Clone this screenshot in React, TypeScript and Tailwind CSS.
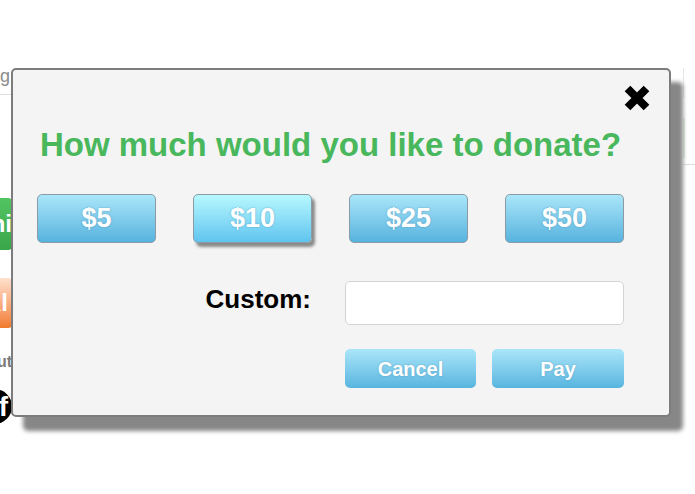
import React from "react";

const amountBase =
  "h-[49px] rounded-[5px] border border-[#8a9ba5] flex items-center justify-center text-white font-bold text-[27px] [text-shadow:0_0_2px_rgba(0,70,110,0.35)]";

export default function App() {
  return (
    <div className="relative w-[695px] h-[494px] bg-white overflow-hidden font-['Liberation_Sans',Arial,sans-serif]">
      {/* background page */}
      <div className="flex flex-col h-full">
        <div className="mt-[64px] h-[24px] w-[600px] overflow-hidden whitespace-nowrap text-[18px] leading-[24px] text-[#8c8c8c]">
          g for good causes, and let the others see the way forward that you like to help
        </div>
        <div className="flex flex-1">
          <div className="w-[12px] shrink-0 flex flex-col items-end overflow-hidden">
            <div className="mt-[6px] h-px w-[12px] bg-[#dedede]" />
            <div className="mt-[103px] h-[52px] w-[80px] shrink-0 rounded-[4px] bg-gradient-to-b from-[#52c462] to-[#3aa64b] flex items-center justify-end text-white font-bold text-[24px]">
              Onlini
            </div>
            <div className="mt-[28px] h-[50px] w-[80px] shrink-0 rounded-[4px] bg-gradient-to-b from-[#fde0cc] to-[#f07a2a] flex items-center justify-end pr-[4px] text-white font-bold text-[24px]">
              Al
            </div>
            <div className="mt-[24px] h-[20px] w-[60px] shrink-0 text-right text-[#7a7a7a] font-bold text-[16px] leading-[20px]">
              about
            </div>
            <div className="mt-[17px] h-[35px] w-[35px] shrink-0 rounded-full bg-black flex items-center justify-end pr-[4px] text-white font-bold text-[28px] leading-none">
              f
            </div>
          </div>
          <div className="flex-1" />
          <div className="w-[12px] shrink-0 flex flex-col">
            <div className="h-[30px] w-px bg-[#e6e6e6] -mt-[20px]" />
            <div className="mt-[20px] h-[40px] w-[2px] bg-[#e2ece2]" />
            <div className="mt-[6px] h-px w-[12px] bg-[#dcdcdc]" />
          </div>
        </div>
      </div>

      {/* modal */}
      <div className="absolute left-[11px] top-[68px] w-[660px] rounded-[5px] border-2 border-[#7c7c7c] bg-[#f4f4f4] shadow-[12px_14px_4px_#878787] pl-[24px] pr-[45px] pt-[56px] pb-[27px]">
        <button className="absolute top-[14px] right-[18px] w-[28px] h-[28px]" aria-label="close">
          <svg width="28" height="28" viewBox="0 0 28 28">
            <path d="M4.5 4.5 L23.5 23.5 M23.5 4.5 L4.5 23.5" stroke="#000" strokeWidth="8" strokeLinecap="butt" />
          </svg>
        </button>

        <h1 className="text-center font-bold text-[33px] leading-[38px] text-[#49b75c] whitespace-nowrap">
          How much would you like to donate?
        </h1>

        <div className="mt-[30px] grid grid-cols-4 gap-[37px]">
          <div className={`${amountBase} bg-gradient-to-b from-[#a9e6f9] to-[#56b3de]`}>$5</div>
          <div className={`${amountBase} bg-gradient-to-b from-[#b6f8fe] to-[#5fc4ef] shadow-[3px_4px_3px_#8a8a8a]`}>$10</div>
          <div className={`${amountBase} bg-gradient-to-b from-[#a9e6f9] to-[#56b3de]`}>$25</div>
          <div className={`${amountBase} bg-gradient-to-b from-[#a9e6f9] to-[#56b3de]`}>$50</div>
        </div>

        <div className="mt-[38px] flex justify-end items-start">
          <label className="mt-[3px] mr-[34px] font-bold text-[26px] leading-[30px] text-black">
            Custom:
          </label>
          <input className="w-[279px] h-[44px] rounded-[5px] border border-[#d3d3d3] bg-white outline-none" />
        </div>

        <div className="mt-[24px] flex justify-end gap-[16px]">
          <button className="w-[131px] h-[39px] rounded-[5px] bg-gradient-to-b from-[#aae6f9] to-[#57b5df] text-white font-bold text-[20px] [text-shadow:0_0_2px_rgba(0,70,110,0.3)]">
            Cancel
          </button>
          <button className="w-[132px] h-[39px] rounded-[5px] bg-gradient-to-b from-[#aae6f9] to-[#57b5df] text-white font-bold text-[20px] [text-shadow:0_0_2px_rgba(0,70,110,0.3)]">
            Pay
          </button>
        </div>
      </div>
    </div>
  );
}
